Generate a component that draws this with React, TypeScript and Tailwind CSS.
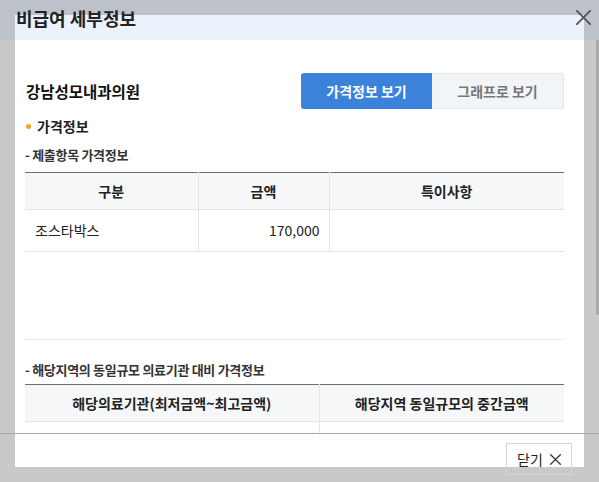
import React from "react";

function CloseIcon({ size, stroke, color }: { size: number; stroke: number; color: string }) {
  return (
    <svg width={size} height={size} viewBox="0 0 16 16" fill="none">
      <path d="M1 1L15 15M15 1L1 15" stroke={color} strokeWidth={stroke} strokeLinecap="square" />
    </svg>
  );
}

function SubTitle({ children }: { children: React.ReactNode }) {
  return <p className="text-[13px] leading-[18px] font-bold text-[#333] tracking-[-0.3px]">{children}</p>;
}

export default function App() {
  return (
    <div
      className="relative h-[482px] w-[599px] overflow-hidden bg-[#c9c9c9]"
      style={{ fontFamily: '"Noto Sans CJK KR", "Noto Sans", sans-serif' }}
    >
      {/* page behind the modal */}
      <div className="absolute left-0 right-0 top-0 h-[40px] bg-[#bdc2ca]" />
      <div className="absolute right-0 top-[40px] h-[275px] w-[3px] rounded-b-sm bg-[#a9a9a9]" />

      {/* modal */}
      <div className="absolute left-[15px] top-[15px] flex h-[452px] w-[569px] flex-col bg-white">
        <div className="h-[25px] shrink-0 bg-[#ebf2fc]" />

        <div className="h-[393px] shrink-0 overflow-hidden pl-[10px] pr-[20px]">
          <div className="mt-[33px] flex h-[36px] items-center justify-between">
            <h2 className="pl-[1px] text-[15.5px] font-bold leading-[20px] text-[#111]">강남성모내과의원</h2>
            <div className="flex h-[36px]">
              <button className="w-[131px] rounded-l-[3px] bg-[#3b82db] text-[14px] font-bold text-white">
                가격정보 보기
              </button>
              <button className="w-[132px] rounded-r-[3px] border border-l-0 border-[#e3e8ed] bg-[#f2f5f8] text-[14px] font-bold text-[#777]">
                그래프로 보기
              </button>
            </div>
          </div>

          <div className="mt-[7px] flex items-center gap-[6px] pl-[1px]">
            <span className="h-[5px] w-[5px] rounded-full bg-[#f5a524]" />
            <span className="text-[14px] font-bold leading-[20px] text-[#222]">가격정보</span>
          </div>

          <div className="mt-[10px]">
            <SubTitle>- 제출항목 가격정보</SubTitle>
          </div>

          <table className="mt-[8px] w-full table-fixed border-collapse border-t border-[#6f6f6f] text-[14px] text-[#222]">
            <colgroup>
              <col className="w-[173px]" />
              <col className="w-[131px]" />
              <col />
            </colgroup>
            <thead>
              <tr className="h-[37px] bg-[#f6f7f9]">
                <th className="border-r border-b border-[#e4e4e4] font-semibold">구분</th>
                <th className="border-r border-b border-[#e4e4e4] font-semibold">금액</th>
                <th className="border-b border-[#e4e4e4] font-semibold">특이사항</th>
              </tr>
            </thead>
            <tbody>
              <tr className="h-[42px]">
                <td className="border-r border-b border-[#e4e4e4] pl-[10px]">조스타박스</td>
                <td className="border-r border-b border-[#e4e4e4] pr-[9px] text-right">170,000</td>
                <td className="border-b border-[#e4e4e4]" />
              </tr>
            </tbody>
          </table>

          <div className="h-[88px] border-b border-[#ebebeb]" />

          <div className="mt-[21px]">
            <SubTitle>- 해당지역의 동일규모 의료기관 대비 가격정보</SubTitle>
          </div>

          <table className="mt-[5px] w-full table-fixed border-collapse border-t border-[#6f6f6f] text-[14px] text-[#222]">
            <colgroup>
              <col className="w-[294px]" />
              <col />
            </colgroup>
            <thead>
              <tr className="h-[37px] bg-[#f6f7f9]">
                <th className="border-r border-b border-[#e4e4e4] font-semibold">해당의료기관(최저금액~최고금액)</th>
                <th className="border-b border-[#e4e4e4] font-semibold">해당지역 동일규모의 중간금액</th>
              </tr>
            </thead>
            <tbody>
              <tr className="h-[42px]">
                <td className="border-r border-b border-[#e4e4e4]" />
                <td className="border-b border-[#e4e4e4]" />
              </tr>
            </tbody>
          </table>
        </div>
      </div>

      {/* title and close icon sit over the header */}
      <h1 className="absolute left-[16px] top-[6px] text-[18px] font-bold leading-[24px] text-[#222]">
        비급여 세부정보
      </h1>
      <button className="absolute left-[576px] top-[10px]">
        <CloseIcon size={15} stroke={2} color="#555" />
      </button>

      {/* footer */}
      <div className="absolute left-0 right-0 top-[433px] h-px bg-[#ababab]" />
      <button className="absolute left-[506px] top-[443px] flex h-[32px] w-[66px] items-center justify-center gap-[7px] border border-[#d6d6d6] text-[14px] text-[#222]">
        <span className="leading-[16px]">닫기</span>
        <CloseIcon size={11} stroke={1.8} color="#333" />
      </button>
    </div>
  );
}
